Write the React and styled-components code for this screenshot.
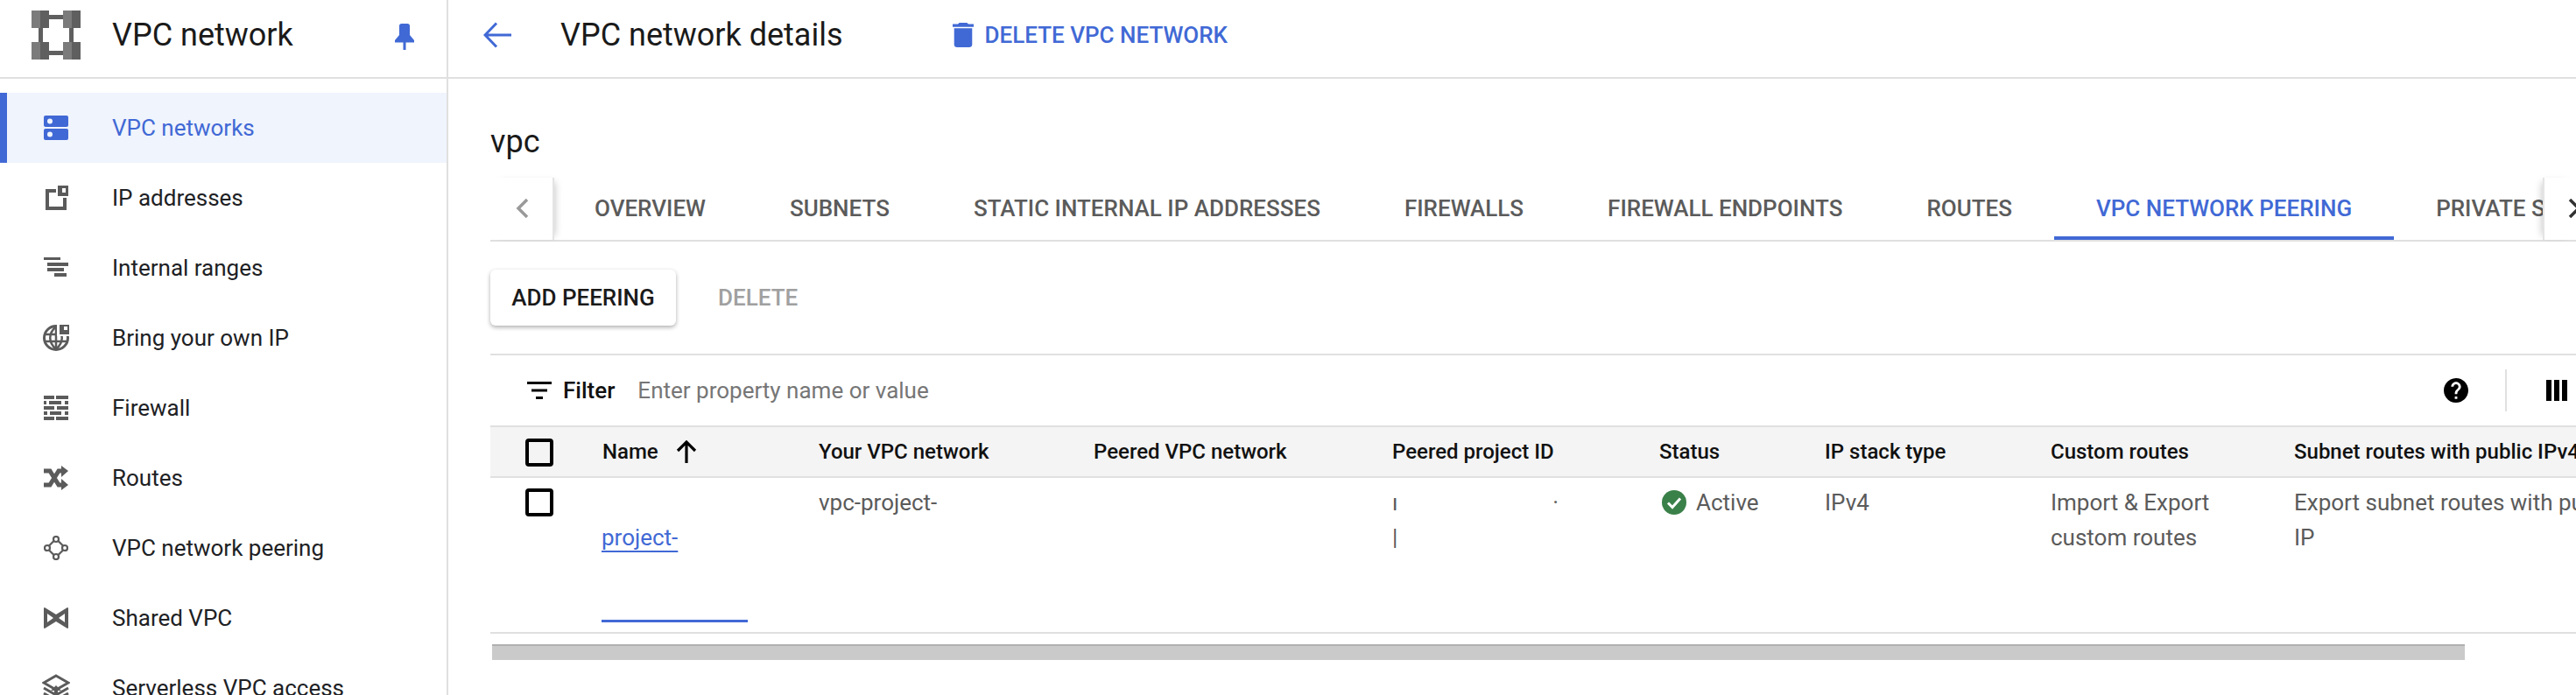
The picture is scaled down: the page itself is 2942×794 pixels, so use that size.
import React from "react";
import styled, { createGlobalStyle, css } from "styled-components";

const BLUE = "#4169d5";
const GREY = "#5b5b5b";
const LINE = "#e0e0e0";

const Global = createGlobalStyle`
  html, body { margin: 0; padding: 0; background: #fff; overflow: hidden; }
  body { font-family: Roboto, "Liberation Sans", sans-serif; color: #202124; }
  * { box-sizing: border-box; }
`;

const Page = styled.div`
  display: flex;
  width: 2942px;
  height: 794px;
  overflow: hidden;
`;

const Sidebar = styled.aside`
  flex: 0 0 512px;
  border-right: 2px solid ${LINE};
  overflow: hidden;
`;

const SideHead = styled.div`
  display: flex;
  align-items: center;
  height: 90px;
  padding: 0 37px 8px 36px;
  border-bottom: 2px solid ${LINE};

  svg:last-child {
    margin-top: 4px;
  }
`;

const SideTitle = styled.h1`
  flex: 1;
  margin: 0 0 0 36px;
  font-size: 36px;
  font-weight: 400;
  color: #1a1a1a;
`;

const Nav = styled.nav`
  display: flex;
  flex-direction: column;
  padding-top: 16px;
`;

const NavItem = styled.a`
  display: flex;
  align-items: center;
  flex: 0 0 80px;
  padding-left: ${(p) => (p.$active ? "42px" : "50px")};
  border-left: ${(p) => (p.$active ? `8px solid ${BLUE}` : "0")};
  background: ${(p) => (p.$active ? "#f0f4fd" : "transparent")};
  color: ${(p) => (p.$active ? BLUE : "#202124")};
  font-size: 26px;
`;

const NavIcon = styled.span`
  display: flex;
  align-items: center;
  justify-content: center;
  width: 28px;
  height: 32px;
  margin-right: 50px;
  color: ${(p) => (p.$active ? BLUE : GREY)};

  svg {
    flex: none;
  }
`;

const Main = styled.main`
  flex: 1;
  min-width: 0;
  overflow: hidden;
`;

const TopBar = styled.header`
  display: flex;
  align-items: center;
  height: 90px;
  padding: 0 0 8px 40px;
  border-bottom: 2px solid ${LINE};
`;

const PageTitle = styled.h2`
  margin: 0 0 0 56px;
  font-size: 36px;
  font-weight: 400;
  color: #1a1a1a;
`;

const DeleteNetwork = styled.button`
  display: flex;
  align-items: center;
  gap: 13px;
  margin-left: 125px;
  padding: 0;
  border: 0;
  background: none;
  color: ${BLUE};
  font: 500 26px Roboto, sans-serif;
`;

const Content = styled.div`
  padding-left: 48px;
`;

const NetworkName = styled.div`
  display: flex;
  align-items: center;
  height: 113px;
  padding-top: 30px;
  font-size: 36px;
  color: #1a1a1a;
`;

const TabBar = styled.div`
  display: flex;
  height: 73px;
  border-bottom: 2px solid ${LINE};
`;

const ScrollButton = styled.div`
  flex: 0 0 ${(p) => (p.$right ? "38px" : "73px")};
  display: flex;
  align-items: center;
  padding-left: ${(p) => (p.$right ? "27px" : "28px")};
  padding-bottom: 2px;
  position: relative;
  z-index: 1;
  background: #fff;
  color: ${(p) => (p.$right ? "#333" : "#9a9a9a")};
  border-${(p) => (p.$right ? "left" : "right")}: 2px solid #e4e4e4;
  box-shadow: ${(p) => (p.$right ? "-6px" : "6px")} 0 8px -5px rgba(0, 0, 0, 0.22);
  overflow: hidden;

  svg {
    flex: none;
  }
`;

const TabStrip = styled.div`
  flex: 1;
  min-width: 0;
  display: flex;
  margin-left: -2px;
  overflow: hidden;
`;

const Tab = styled.div`
  flex: none;
  display: flex;
  align-items: center;
  height: 71px;
  padding: 2px 48px 0;
  font-size: 26px;
  font-weight: 500;
  white-space: nowrap;
  color: ${(p) => (p.$active ? BLUE : GREY)};
  border-bottom: 4px solid ${(p) => (p.$active ? BLUE : "transparent")};
`;

const Actions = styled.div`
  display: flex;
  align-items: center;
  height: 128px;
  gap: 48px;
`;

const RaisedButton = styled.button`
  width: 212px;
  height: 64px;
  border: 0;
  border-radius: 6px;
  background: #fff;
  box-shadow: 0 2px 5px rgba(0, 0, 0, 0.32);
  color: #1a1a1a;
  font: 500 26px Roboto, sans-serif;
`;

const FlatButton = styled.button`
  padding: 0;
  border: 0;
  background: none;
  color: #a0a0a0;
  font: 500 26px Roboto, sans-serif;
`;

const FilterBar = styled.div`
  display: flex;
  align-items: center;
  height: 82px;
  padding: 0 10px 0 42px;
  border-top: 2px solid ${LINE};
`;

const FilterLabel = styled.span`
  margin-left: 13px;
  font-size: 26px;
  font-weight: 500;
  color: #111;
`;

const FilterHint = styled.span`
  margin-left: 26px;
  font-size: 26px;
  color: #767676;
`;

const FilterTools = styled.div`
  display: flex;
  align-items: center;
  margin-left: auto;
`;

const ToolDivider = styled.span`
  width: 2px;
  height: 48px;
  margin: 0 45px 0 42px;
  background: ${LINE};
`;

const rowGrid = css`
  display: grid;
  grid-template-columns: 127px 248px 314px 341px 305px 189px 258px 278px 400px;
`;

const HeadRow = styled.div`
  ${rowGrid}
  align-items: center;
  height: 60px;
  border-top: 2px solid ${LINE};
  border-bottom: 2px solid ${LINE};
  background: #f4f4f4;
  font-size: 24px;
  font-weight: 500;
  color: #111;
  white-space: nowrap;
`;

const BodyRow = styled.div`
  ${rowGrid}
  height: 178px;
  border-bottom: 2px solid ${LINE};
  font-size: 26px;
  line-height: 40px;
  color: ${GREY};
  overflow: hidden;
`;

const HeadName = styled.span`
  display: flex;
  align-items: center;
  gap: 20px;
  padding-left: 1px;
`;

const CheckCell = styled.div`
  padding-left: 40px;
  padding-top: ${(p) => (p.$body ? "12px" : "2px")};
`;

const Checkbox = styled.span`
  display: block;
  width: 32px;
  height: 32px;
  border: 4px solid #000;
  border-radius: 4px;
`;

const BodyCell = styled.div`
  padding-top: 8px;
`;

const NameCell = styled(BodyCell)`
  display: flex;
  flex-direction: column;
  align-items: flex-start;
  padding-top: 48px;
`;

const NameLink = styled.a`
  color: ${BLUE};
  text-decoration: underline;
  text-decoration-thickness: 2px;
  text-underline-offset: 6px;
`;

const HiddenLink = styled.a`
  display: block;
  width: 167px;
  height: 37px;
  margin-top: 40px;
  border-bottom: 3px solid ${BLUE};
`;

const HiddenId = styled.div`
  display: flex;
  justify-content: space-between;
  width: 190px;
`;

const Status = styled(BodyCell)`
  display: flex;
  align-items: flex-start;
  gap: 11px;
  padding-left: 3px;
`;

const StatusIcon = styled.svg`
  flex: none;
  margin-top: 6px;
`;

const ScrollTrack = styled.div`
  width: 2253px;
  height: 18px;
  margin: 12px 0 0 2px;
  background: #cacaca;
  border-top: 2px solid #b0b0b0;
`;

const Logo = () => (
  <svg width="56" height="56" viewBox="0 0 56 56">
    <path d="M18 5h20v5H18zM18 46h20v5H18zM8 18h5v20H8zM43 18h5v20h-5z" fill="#5f5f5f" />
    {[[0, 0], [36, 0], [0, 36], [36, 36]].map(([x, y]) => (
      <g key={`${x}${y}`}>
        <rect x={x} y={y} width="10" height="20" fill="#7b7b7b" />
        <rect x={x + 10} y={y} width="10" height="20" fill="#5f5f5f" />
      </g>
    ))}
  </svg>
);

const PinIcon = () => (
  <svg width="22" height="30" viewBox="0 0 22 30" fill={BLUE}>
    <path d="M5 2.500C5 1 6 0 7.500 0h7C16 0 17 1 17 2.500V13l5 6v2.500H12.500V30h-3v-8.500H0V19l5-6z" />
  </svg>
);

const BackIcon = () => (
  <svg width="32" height="30" viewBox="0 0 32 30" fill="none" stroke={BLUE} strokeWidth="3">
    <path d="M32 15H3M15 1.500 2 15l13 13.500" />
  </svg>
);

const TrashIcon = () => (
  <svg width="24" height="28" viewBox="5 3 14 18" preserveAspectRatio="none" fill={BLUE}>
    <path d="M6 19c0 1.100.9 2 2 2h8c1.100 0 2-.9 2-2V7H6v12zM19 4h-3.500l-1-1h-5l-1 1H5v2h14V4z" />
  </svg>
);

const Chevron = ({ right }) => (
  <svg width="16" height="22" viewBox="0 0 16 22" fill="none" stroke="currentColor" strokeWidth="3.500">
    <path d={right ? "M2 1l10 10L2 21" : "M14 1 4 11l10 10"} />
  </svg>
);

const navIcons = {
  networks: (
    <svg width="28" height="28" viewBox="0 0 28 28">
      <rect width="28" height="13" rx="2" fill="currentColor" />
      <rect y="15" width="28" height="13" rx="2" fill="currentColor" />
      <circle cx="7" cy="6.500" r="3" fill="#f0f4fd" />
      <circle cx="7" cy="21.500" r="3" fill="#f0f4fd" />
    </svg>
  ),
  addresses: (
    <svg width="28" height="28" viewBox="0 0 28 28" fill="currentColor">
      <path d="M2 4h12v4H6v16h16V14h4v14H2z" />
      <path fillRule="evenodd" d="M16 0h12v12H16zM21 3v5h4V3z" />
    </svg>
  ),
  ranges: (
    <svg width="28" height="24" viewBox="0 0 28 24" fill="currentColor">
      <path d="M0 0h19v3H0zM4 6h24v4H4zM4 12h19v4H4zM12 18h14v4H12z" />
    </svg>
  ),
  ownIp: (
    <svg width="30" height="30" viewBox="0 0 30 30">
      <circle cx="15" cy="15" r="13.500" fill="none" stroke="currentColor" strokeWidth="3" />
      <path d="M2 11h26M2 19h26M15 2v26M15 2c-9 8-9 18 0 26M15 2c9 8 9 18 0 26" fill="none" stroke="currentColor" strokeWidth="2.500" />
      <rect x="16" y="0" width="14" height="13" fill="#fff" />
      <path fillRule="evenodd" d="M19 0h11v11H19zM24 2v4h4V2z" fill="currentColor" />
    </svg>
  ),
  firewall: (
    <svg width="28" height="28" viewBox="0 0 28 28" fill="currentColor">
      <path d="M0 0h12v4H0zM14 0h14v4H14zM0 6h3v4H0zM6 6h14v4H6zM24 6h4v4h-4zM0 12h12v4H0zM15 12h13v4H15zM0 18h4v4H0zM7 18h13v4H7zM24 18h4v4h-4zM0 24h12v4H0zM14 24h14v4H14z" />
    </svg>
  ),
  routes: (
    <svg width="28" height="28" viewBox="0 0 28 28" fill="currentColor">
      <path d="M0 6h7l10 16h5M0 22h7L17 6h5" fill="none" stroke="currentColor" strokeWidth="5" />
      <path d="M20 0l8 6-8 7zM20 15l8 7-8 6z" />
    </svg>
  ),
  peering: (
    <svg width="28" height="28" viewBox="0 0 28 28" fill="none" stroke="currentColor" strokeWidth="2.200">
      <circle cx="14" cy="4" r="3" />
      <circle cx="4" cy="14" r="3" />
      <circle cx="24" cy="14" r="3" />
      <circle cx="14" cy="24" r="3" />
      <path d="M11.500 6 6 11.500M16.500 6 22 11.500M22 16.500 16.500 22M7 14h0M6 16.500 11.500 22" />
    </svg>
  ),
  shared: (
    <svg width="28" height="24" viewBox="0 0 28 24">
      <path fillRule="evenodd" fill="currentColor" d="M1 0l13 8 13-8a1 1 0 0 1 1 1v22a1 1 0 0 1-1 1L14 16 1 24a1 1 0 0 1-1-1V1a1 1 0 0 1 1-1zM4 7v10l7-5zM24 7l-7 5 7 5z" />
    </svg>
  ),
  serverless: (
    <svg width="32" height="32" viewBox="0 0 32 32" fill="none" stroke="currentColor" strokeWidth="3">
      <path d="M16 2 30 10 16 18 2 10zM2 16l14 8 14-8M2 22l14 8 14-8" />
      <path d="M16 13l6 6h-4v6h-4v-6h-4z" fill="currentColor" stroke="none" />
    </svg>
  ),
};

const navItems = [
  ["networks", "VPC networks"],
  ["addresses", "IP addresses"],
  ["ranges", "Internal ranges"],
  ["ownIp", "Bring your own IP"],
  ["firewall", "Firewall"],
  ["routes", "Routes"],
  ["peering", "VPC network peering"],
  ["shared", "Shared VPC"],
  ["serverless", "Serverless VPC access"],
];

const tabs = [
  "OVERVIEW",
  "SUBNETS",
  "STATIC INTERNAL IP ADDRESSES",
  "FIREWALLS",
  "FIREWALL ENDPOINTS",
  "ROUTES",
  "VPC NETWORK PEERING",
  "PRIVATE SERVICE CONNECTION",
];

export default function App() {
  return (
    <Page>
      <Global />
      <Sidebar>
        <SideHead>
          <Logo />
          <SideTitle>VPC network</SideTitle>
          <PinIcon />
        </SideHead>
        <Nav>
          {navItems.map(([icon, label], i) => (
            <NavItem key={label} $active={i === 0}>
              <NavIcon $active={i === 0}>{navIcons[icon]}</NavIcon>
              {label}
            </NavItem>
          ))}
        </Nav>
      </Sidebar>
      <Main>
        <TopBar>
          <BackIcon />
          <PageTitle>VPC network details</PageTitle>
          <DeleteNetwork>
            <TrashIcon />
            DELETE VPC NETWORK
          </DeleteNetwork>
        </TopBar>
        <Content>
          <NetworkName>vpc</NetworkName>
          <TabBar>
            <ScrollButton>
              <Chevron />
            </ScrollButton>
            <TabStrip>
              {tabs.map((t) => (
                <Tab key={t} $active={t === "VPC NETWORK PEERING"}>
                  {t}
                </Tab>
              ))}
            </TabStrip>
            <ScrollButton $right>
              <Chevron right />
            </ScrollButton>
          </TabBar>
          <Actions>
            <RaisedButton>ADD PEERING</RaisedButton>
            <FlatButton>DELETE</FlatButton>
          </Actions>
          <FilterBar>
            <svg width="28" height="20" viewBox="0 0 28 20" fill="#000">
              <path d="M0 0h28v3H0zM5 8.500h18v3H5zM10 17h8v3h-8z" />
            </svg>
            <FilterLabel>Filter</FilterLabel>
            <FilterHint>Enter property name or value</FilterHint>
            <FilterTools>
              <svg width="28" height="28" viewBox="2 2 20 20" fill="#000">
                <path d="M12 2C6.480 2 2 6.480 2 12s4.480 10 10 10 10-4.480 10-10S17.520 2 12 2zm1 17h-2v-2h2v2zm2.070-7.750-.9.920C13.450 12.900 13 13.500 13 15h-2v-.5c0-1.100.45-2.100 1.170-2.830l1.240-1.260c.37-.36.59-.86.59-1.410 0-1.100-.9-2-2-2s-2 .9-2 2H8c0-2.210 1.790-4 4-4s4 1.790 4 4c0 .88-.36 1.680-.93 2.250z" />
              </svg>
              <ToolDivider />
              <svg width="24" height="24" viewBox="0 0 24 24" fill="#000">
                <path d="M0 0h6v24H0zM9 0h6v24H9zM18 0h6v24h-6z" />
              </svg>
            </FilterTools>
          </FilterBar>
          <HeadRow>
            <CheckCell>
              <Checkbox />
            </CheckCell>
            <HeadName>
              Name
              <svg width="24" height="26" viewBox="0 0 24 26" fill="none" stroke="#000" strokeWidth="3.200">
                <path d="M12 26V2M2 12 12 2l10 10" />
              </svg>
            </HeadName>
            <span>Your VPC network</span>
            <span>Peered VPC network</span>
            <span>Peered project ID</span>
            <span>Status</span>
            <span>IP stack type</span>
            <span>Custom routes</span>
            <span>Subnet routes with public IPv4</span>
          </HeadRow>
          <BodyRow>
            <CheckCell $body>
              <Checkbox />
            </CheckCell>
            <NameCell>
              <NameLink>project-</NameLink>
              <HiddenLink />
            </NameCell>
            <BodyCell>vpc-project-</BodyCell>
            <BodyCell />
            <BodyCell>
              <HiddenId>
                <span>ı</span>
                <span>·</span>
              </HiddenId>
              <div>|</div>
            </BodyCell>
            <Status>
              <StatusIcon width="28" height="28" viewBox="0 0 28 28">
                <circle cx="14" cy="14" r="14" fill="#3a8149" />
                <path d="M7 14.500l5 5 9-10" fill="none" stroke="#fff" strokeWidth="3" />
              </StatusIcon>
              Active
            </Status>
            <BodyCell>IPv4</BodyCell>
            <BodyCell>
              Import &amp; Export
              <br />
              custom routes
            </BodyCell>
            <BodyCell>Export subnet routes with public IP</BodyCell>
          </BodyRow>
          <ScrollTrack />
        </Content>
      </Main>
    </Page>
  );
}
